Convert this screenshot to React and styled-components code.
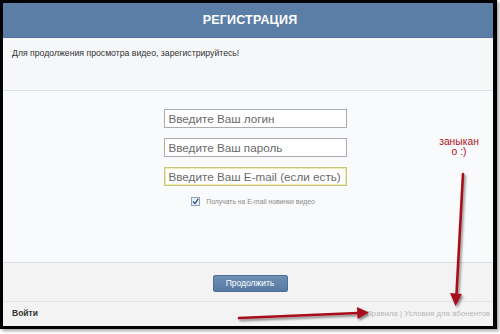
import React from 'react'
import styled, { createGlobalStyle } from 'styled-components'

const GlobalStyle = createGlobalStyle`
  html, body {
    margin: 0;
    padding: 0;
    background: #fff;
    font-family: "Liberation Sans", Arial, sans-serif;
  }
`

const Page = styled.div`
  position: relative;
  width: 500px;
  height: 334px;
  overflow: hidden;
`

const Frame = styled.div`
  width: 490px;
  height: 323px;
  border: 3px solid #000;
  border-right-width: 4px;
  box-shadow: 2px 2px 3px rgba(0, 0, 0, 0.35);
  display: flex;
  flex-direction: column;
  background: #f3f4f6;
`

const Header = styled.div`
  height: 34px;
  background: #5b7ea6;
  border-bottom: 1px solid #4f7099;
  display: flex;
  align-items: center;
  justify-content: center;
  color: #fff;
  font-weight: bold;
  font-size: 12.5px;
  letter-spacing: 0.2px;
  padding-left: 4px;
`

const Intro = styled.div`
  height: 53px;
  box-sizing: border-box;
  padding: 10px 9px 0;
  background: #f6f7f9;
  border-bottom: 1px solid #dde1e6;
  font-size: 8.7px;
  color: #333;
`

const FormSection = styled.div`
  height: 172px;
  box-sizing: border-box;
  padding-top: 18px;
  background: #f9fafb;
  border-bottom: 1px solid #dcdfe3;
  display: flex;
  flex-direction: column;
  align-items: center;
  gap: 10px;
  padding-left: 14px;
`

const Field = styled.div`
  width: 183px;
  height: 19px;
  box-sizing: border-box;
  background: #fff;
  border: 1px solid ${(p) => (p.$active ? '#c9c77a' : '#a9adb2')};
  box-shadow: ${(p) => (p.$active ? 'inset 0 0 0 1px #eeeab0' : 'none')};
  padding-left: 4px;
  display: flex;
  align-items: center;
  font-size: 11.7px;
  color: #6a6a6a;
`

const CheckRow = styled.label`
  display: flex;
  align-items: center;
  gap: 6px;
  font-size: 6.8px;
  color: #8a8a8a;
  margin-top: 1px;
  margin-right: 4px;
`

const CheckBox = styled.span`
  width: 7px;
  height: 7px;
  border: 1px solid #8fa3bd;
  background: #e8eef6;
  display: flex;
  align-items: center;
  justify-content: center;
`

const ButtonBar = styled.div`
  height: 38px;
  background: #f3f3f4;
  border-bottom: 1px solid #e2e3e5;
  display: flex;
  align-items: center;
  justify-content: center;
  padding-left: 4px;
`

const Button = styled.button`
  width: 75px;
  height: 17px;
  border: 1px solid #4d6f96;
  border-radius: 2px;
  background: linear-gradient(#6d8fb5, #587aa2);
  color: #fff;
  font-family: "Liberation Sans", Arial, sans-serif;
  font-size: 8.5px;
  padding: 0;
  margin-top: 2px;
`

const Footer = styled.div`
  flex: 1;
  background: #f3f3f4;
  display: flex;
  align-items: center;
  justify-content: space-between;
  padding: 0 3px 2px 9px;
  font-size: 8.5px;
`

const Login = styled.span`
  font-weight: bold;
  color: #333;
`

const Links = styled.span`
  color: #b8b8b8;
  font-size: 7.8px;
`

const Note = styled.div`
  position: absolute;
  left: 435px;
  top: 137px;
  width: 48px;
  text-align: center;
  font-size: 10.3px;
  line-height: 10px;
  color: #b0121e;
`

const Arrows = styled.svg`
  position: absolute;
  left: 0;
  top: 0;
  pointer-events: none;
`

const Tick = () => (
  <svg width="7" height="7" viewBox="0 0 7 7">
    <path d="M1 3.5 L3 5.5 L6.2 0.8" fill="none" stroke="#2c4f86" strokeWidth="1.3" />
  </svg>
)

export default function App() {
  return (
    <>
      <GlobalStyle />
      <Page>
        <Frame>
          <Header>РЕГИСТРАЦИЯ</Header>
          <Intro>Для продолжения просмотра видео, зарегистрируйтесь!</Intro>
          <FormSection>
            <Field>Введите Ваш логин</Field>
            <Field>Введите Ваш пароль</Field>
            <Field $active>Введите Ваш E-mail (если есть)</Field>
            <CheckRow>
              <CheckBox>
                <Tick />
              </CheckBox>
              Получать на E-mail новинки видео
            </CheckRow>
          </FormSection>
          <ButtonBar>
            <Button>Продолжить</Button>
          </ButtonBar>
          <Footer>
            <Login>Войти</Login>
            <Links>Правила | Условия для абонентов</Links>
          </Footer>
        </Frame>
        <Note>
          заныкан
          <br />о :)
        </Note>
        <Arrows width="500" height="334" viewBox="0 0 500 334">
          <defs>
            <filter id="sh" x="-20%" y="-20%" width="140%" height="140%">
              <feDropShadow dx="1.5" dy="2" stdDeviation="1.2" floodColor="#000" floodOpacity="0.45" />
            </filter>
          </defs>
          <g filter="url(#sh)" fill="#a8101b" stroke="#a8101b">
            <line x1="463" y1="174" x2="456.5" y2="294" strokeWidth="2.6" strokeLinecap="round" />
            <polygon points="450,293 462,294 455.5,306" stroke="none" />
            <line x1="239" y1="318" x2="358" y2="313" strokeWidth="2.6" strokeLinecap="round" />
            <polygon points="357,307 369,312.5 357.5,319" stroke="none" />
          </g>
        </Arrows>
      </Page>
    </>
  )
}
